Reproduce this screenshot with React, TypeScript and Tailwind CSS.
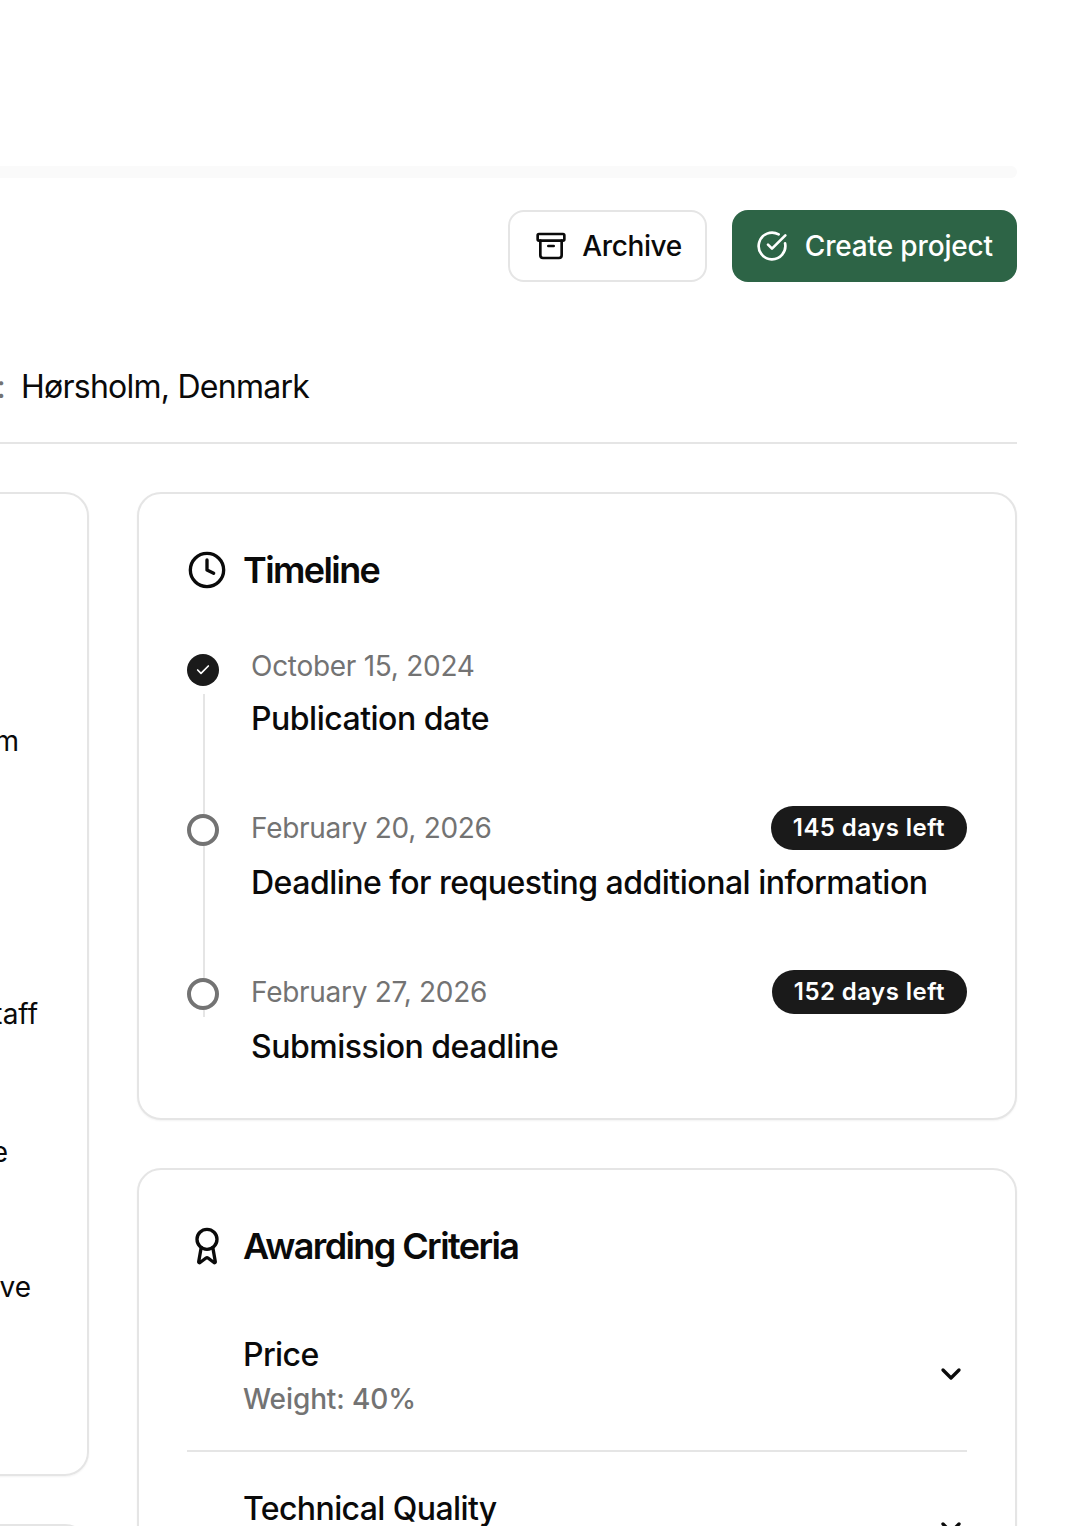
import { Archive, CircleCheckBig, Clock, Award, ChevronDown, Check } from "lucide-react";

const font = { fontFamily: "Inter, sans-serif" };

const milestones = [
  { date: "October 15, 2024", title: "Publication date", done: true },
  { date: "February 20, 2026", title: "Deadline for requesting additional information", left: "145 days left" },
  { date: "February 27, 2026", title: "Submission deadline", left: "152 days left" },
];

const TimelineRow = ({ item, last }: { item: (typeof milestones)[number]; last: boolean }) => (
  <div className={`relative flex gap-8 ${last ? "" : "pb-[63px]"}`}>
    {!last && (
      <div className={`absolute left-[16px] bottom-[-8px] w-[2px] bg-[#e5e5e5] ${item.done ? "top-[48px]" : "top-[40px]"}`} />
    )}
    {last && <div className="absolute left-[16px] top-[40px] h-[7px] w-[2px] bg-[#e5e5e5]" />}
    <div className="mt-[8px] shrink-0">
      {item.done ? (
        <div className="flex h-8 w-8 items-center justify-center rounded-full bg-[#1a1a1a]">
          <Check className="h-4 w-4 text-white" strokeWidth={2.5} />
        </div>
      ) : (
        <div className="h-8 w-8 rounded-full border-4 border-[#737373]" />
      )}
    </div>
    <div className="min-w-0 flex-1">
      <div className="flex items-center justify-between">
        <span className="text-[28px] leading-[40px] tracking-[-0.28px] text-[#737373]">{item.date}</span>
        {item.left && (
          <span className="flex h-[44px] items-center rounded-full bg-[#1a1a1a] px-[22px] text-[24px] font-semibold tracking-[0.45px] text-white">
            {item.left}
          </span>
        )}
      </div>
      <div className="mt-[9px] text-[32px] leading-[48px] font-medium tracking-[-0.5px] text-[#0a0a0a]">{item.title}</div>
    </div>
  </div>
);

const Criterion = ({ name, weight, divider }: { name: string; weight: string; divider?: boolean }) => (
  <div className={`flex items-center justify-between pl-[56px] ${divider ? "border-b-2 border-[#e5e5e5] pb-[31px]" : "pt-[33px]"}`}>
    <div>
      <div className="text-[32px] leading-[48px] font-medium tracking-[-0.6px] text-[#0a0a0a]">{name}</div>
      <div className="text-[28px] leading-[40px] font-medium tracking-[-0.1px] text-[#737373]">{weight}</div>
    </div>
    <ChevronDown className="-mt-[2px] h-8 w-8 text-[#0a0a0a]" strokeWidth={2.5} />
  </div>
);

export default function App() {
  return (
    <div className="h-[1526px] w-full overflow-hidden bg-white" style={font}>
      <div className="ml-[-600px] mr-[71px] pt-[166px]">
        <div className="h-[12px] rounded-r-[6px] bg-[#fafafa]" />
        <div className="mt-[32px] flex justify-end gap-[25px]">
          <button className="flex h-[72px] items-center gap-[15px] rounded-[16px] border-2 border-[#e5e5e5] bg-white pr-[23px] pl-[25px] text-[28px] font-medium tracking-[-0.4px] text-[#0a0a0a]">
            <Archive className="h-8 w-8" strokeWidth={2} />
            Archive
          </button>
          <button className="flex h-[72px] items-center gap-[17px] rounded-[16px] bg-[#2d6446] px-6 text-[28px] font-medium tracking-[-0.15px] text-white">
            <CircleCheckBig className="h-8 w-8" strokeWidth={2} />
            Create project
          </button>
        </div>
        <div className="mt-[81px] flex h-[81px] justify-end border-b-2 border-[#e5e5e5] pr-[708px] text-[32px] leading-[48px] tracking-[-0.75px] text-[#0a0a0a]">
          <span className="mr-[16px] text-[#737373]">:</span>
          Hørsholm, Denmark
        </div>
        <div className="mt-[48px] flex items-start gap-[48px]">
          <div className="flex flex-1 flex-col gap-[48px]">
            <div className="relative h-[984px] rounded-[24px] border-2 border-[#e5e5e5] text-[28px] text-[#0a0a0a] shadow-xs">
              <span className="absolute right-[68px] top-[226px]">m</span>
              <span className="absolute right-[49px] top-[499px]">staff</span>
              <span className="absolute right-[79px] top-[637px]">e</span>
              <span className="absolute right-[56px] top-[772px]">ve</span>
            </div>
            <div className="h-[200px] rounded-[24px] border-2 border-[#e5e5e5]" />
          </div>
          <div className="flex w-[880px] shrink-0 flex-col gap-[48px]">
            <section className="rounded-[24px] border-2 border-[#e5e5e5] bg-white px-12 pt-12 pb-[47px] shadow-xs">
              <div className="flex items-center gap-[16px]">
                <Clock className="h-10 w-10 text-[#0a0a0a]" strokeWidth={2} />
                <h2 className="text-[36px] leading-[56px] font-semibold tracking-[-1.6px] text-[#0a0a0a]">Timeline</h2>
              </div>
              <div className="mt-[48px]">
                {milestones.map((item, i) => (
                  <TimelineRow key={item.date} item={item} last={i === milestones.length - 1} />
                ))}
              </div>
            </section>
            <section className="rounded-[24px] border-2 border-[#e5e5e5] bg-white px-12 pt-12 pb-8 shadow-xs">
              <div className="flex items-center gap-[16px]">
                <Award className="h-10 w-10 text-[#0a0a0a]" strokeWidth={2} />
                <h2 className="text-[36px] leading-[56px] font-semibold tracking-[-1.6px] text-[#0a0a0a]">Awarding Criteria</h2>
              </div>
              <div className="mt-[57px]">
                <Criterion name="Price" weight="Weight: 40%" divider />
                <Criterion name="Technical Quality" weight="Weight: 35%" />
              </div>
            </section>
          </div>
        </div>
      </div>
    </div>
  );
}
